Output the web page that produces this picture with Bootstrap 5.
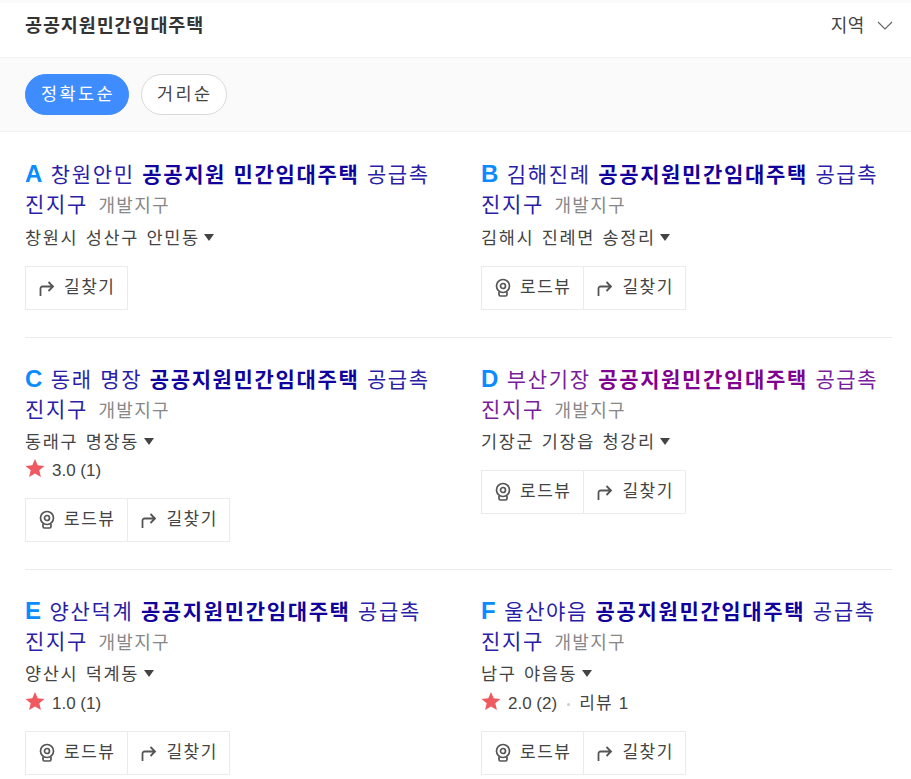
<!doctype html>
<html lang="ko">

<head>
    <meta charset="utf-8">
    <meta name="viewport" content="width=device-width, initial-scale=1">
    <link href="https://cdn.jsdelivr.net/npm/bootstrap@5.3.3/dist/css/bootstrap.min.css" rel="stylesheet">
    <title>공공지원민간임대주택</title>
    <style>
        body { font-family: "Liberation Sans", "Noto Sans CJK KR", sans-serif; color: #333; height: 779px; overflow: hidden; }
        .top-bar { height: 58px; padding: 0 18px 9px 25px; border-top: 3px solid #fafafa; border-bottom: 1px solid #f2f2f2; }
        .top-title { font-size: 18.5px; letter-spacing: .9px; font-weight: 700; line-height: 26px; margin: 0; color: #333; }
        .top-region { font-size: 18px; letter-spacing: .6px; color: #444; line-height: 26px; gap: 12px; }
        .sort-bar { height: 74px; padding: 0 25px; background: #fafafa; border-bottom: 1px solid #f2f2f2; gap: 12px; }
        .sort-pill { height: 41px; font-size: 17.5px; letter-spacing: 2.4px; line-height: 38px; padding: 0 13px 0 15px; border-radius: 21px; border: 1px solid #d9d9d9; background: #fff; color: #444; }
        .sort-pill.on { background: #3f8cff; border-color: #3f8cff; color: #fff; }
        .place-list { padding: 0 19px 0 25px; }
        .place-row { border-bottom: 1px solid #ebebeb; }
        .place-row:last-child { border-bottom: 0; }
        .place-item { width: 456px; padding-top: 26px; flex: none; }
        .place-item.row-short { height: 205px; padding-top: 27px; }
        .place-item.row-tall { height: 231px; }
        .place-name { font-size: 21px; letter-spacing: 1.65px; line-height: 30px; color: #2a1ea8; }
        .place-name.seen { color: #7a1d9c; }
        .place-name b { color: #10009c; }
        .place-name.seen b { color: #80008f; }
        .place-mark { font-family: "Liberation Sans", sans-serif; font-weight: 700; font-size: 24px; letter-spacing: 0; color: #0a8cff; margin-right: 1px; }
        .place-kind { font-size: 18px; letter-spacing: 1.3px; color: #888; margin-left: 3px; }
        .place-addr { font-size: 17.5px; letter-spacing: 1.65px; word-spacing: 1px; line-height: 24px; color: #444; margin-top: 4px; }
        .row-short .place-addr { margin-top: 5px; }
        .place-addr i { display: inline-block; width: 0; height: 0; border: 5px solid transparent; border-top: 7px solid #444; border-bottom: 0; margin-left: -3px; vertical-align: 3px; }
        .place-rate { font-size: 17px; line-height: 24px; color: #444; margin-top: 5px; }
        .place-row:last-child .place-rate { margin-top: 6px; }
        .place-rate svg { margin-right: 7px; vertical-align: -1px; }
        .place-rate .dot { display: inline-block; width: 3px; height: 3px; border-radius: 50%; background: #ccc; margin: 0 9px 0 10px; vertical-align: 3px; }
        .place-rate .revs { letter-spacing: 1.2px; }
        .place-btns { margin-top: 16px; }
        .place-btn { height: 44px; border: 1px solid #ebebeb; margin-left: -1px; padding: 0 12px 0 13px; font-size: 17px; letter-spacing: 1.5px; color: #444; gap: 9px; background: #fff; }
        .place-btn:first-child { margin-left: 0; }
        .place-btn:not(:first-child) { padding-right: 11px; }
        .place-rate + .place-btns { margin-top: 15px; }
    </style>
</head>

<body>
    <header class="top-bar d-flex align-items-center justify-content-between">
        <h1 class="top-title">공공지원민간임대주택</h1>
        <div class="top-region d-flex align-items-center">
            지역
            <svg width="16" height="9" viewBox="0 0 16 9"><path d="M1 1l7 7 7-7" fill="none" stroke="#666" stroke-width="1.2"/></svg>
        </div>
    </header>

    <div class="sort-bar d-flex align-items-center">
        <span class="sort-pill on">정확도순</span>
        <span class="sort-pill">거리순</span>
    </div>

    <main class="place-list" id="lista"></main>

    <script>
        const roadIcon = '<svg width="16" height="20" viewBox="0 0 16 20"><circle cx="8" cy="8" r="6.500" fill="none" stroke="#555" stroke-width="1.700"/><circle cx="8" cy="8" r="2.500" fill="none" stroke="#555" stroke-width="1.700"/><path d="M4 14v2.500a1.500 1.500 0 0 0 1.500 1.500h5a1.500 1.500 0 0 0 1.500-1.500V14" fill="none" stroke="#555" stroke-width="1.700"/></svg>';
        const routeIcon = '<svg width="16" height="15" viewBox="0 0 16 15"><path d="M1.500 15V7.500a2 2 0 0 1 2-2H14M9.500 1l4.500 4.500L9.500 10" fill="none" stroke="#555" stroke-width="1.800"/></svg>';
        const star = '<svg width="20" height="18" viewBox="0 0 20 18"><path d="M10 0l2.700 6.300 6.800.6-5.200 4.400 1.600 6.700L10 14.400 4.100 18l1.600-6.700L.5 6.900l6.800-.6z" fill="#ee5a5f"/></svg>';

        const filas = [
            [
                { letra: 'A', nombre: '창원안민', resalte: '공공지원 민간임대주택', dir: '창원시 성산구 안민동', soloRuta: true },
                { letra: 'B', nombre: '김해진례', resalte: '공공지원민간임대주택', dir: '김해시 진례면 송정리' }
            ],
            [
                { letra: 'C', nombre: '동래 명장', resalte: '공공지원민간임대주택', dir: '동래구 명장동', nota: '3.0', votos: 1 },
                { letra: 'D', nombre: '부산기장', resalte: '공공지원민간임대주택', dir: '기장군 기장읍 청강리', visto: true }
            ],
            [
                { letra: 'E', nombre: '양산덕계', resalte: '공공지원민간임대주택', dir: '양산시 덕계동', nota: '1.0', votos: 1 },
                { letra: 'F', nombre: '울산야음', resalte: '공공지원민간임대주택', dir: '남구 야음동', nota: '2.0', votos: 2, resenas: 1 }
            ]
        ];

        const lista = document.getElementById('lista');
        filas.forEach((fila, i) => {
            const alto = i === 0 ? 'row-short' : 'row-tall';
            lista.innerHTML += '<div class="place-row d-flex">' + fila.map(p => `
                <article class="place-item ${alto}">
                    <div class="place-name ${p.visto ? 'seen' : ''}"><span class="place-mark">${p.letra}</span> ${p.nombre} <b>${p.resalte}</b> 공급촉<br>진지구 <span class="place-kind">개발지구</span></div>
                    <div class="place-addr">${p.dir} <i></i></div>
                    ${p.nota ? `<div class="place-rate">${star}${p.nota} (${p.votos})${p.resenas ? `<span class="dot"></span><span class="revs">리뷰 ${p.resenas}</span>` : ''}</div>` : ''}
                    <div class="place-btns d-flex">
                        ${p.soloRuta ? '' : `<span class="place-btn d-flex align-items-center">${roadIcon}로드뷰</span>`}
                        <span class="place-btn d-flex align-items-center">${routeIcon}길찾기</span>
                    </div>
                </article>`).join('') + '</div>';
        });
    </script>
</body>

</html>
